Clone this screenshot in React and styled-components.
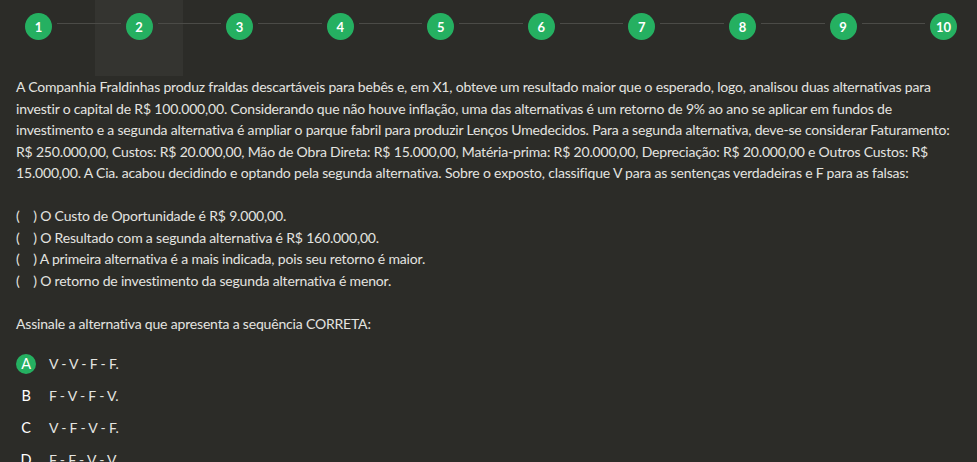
import React from "react";
import styled, { createGlobalStyle } from "styled-components";

const GlobalStyle = createGlobalStyle`
  html, body {
    margin: 0;
    padding: 0;
    background: #2c2c28;
  }
  body {
    font-family: "Lato", "Liberation Sans", sans-serif;
    color: #e4e4e0;
  }
`;

// Steps bar
const Steps = styled.nav`
  position: relative;
  z-index: 0;
  display: flex;
  align-items: flex-start;
  height: 76px;
  padding: 0 20px 0 25px;
  box-sizing: border-box;
`;

const Step = styled.div`
  position: relative;
  flex: 0 0 auto;
  width: 27px;
  height: 27px;
  margin-top: 13px;
  border-radius: 50%;
  background: #25b061;
  color: #fff;
  font-size: 13px;
  font-weight: 700;
  display: flex;
  align-items: center;
  justify-content: center;
  cursor: pointer;

  ${(p) =>
    p.$active &&
    `
    &::before {
      content: "";
      position: absolute;
      z-index: -1;
      top: -13px;
      left: -30.5px;
      width: 88px;
      height: 76px;
      background: #343430;
    }
  `}
`;

const Connector = styled.div`
  flex: 1;
  height: 1px;
  margin: 23px 5px 0;
  background: #4b4b47;
`;

// Question body
const Question = styled.section`
  padding: 0 12px 0 16px;
  font-size: 14px;
  letter-spacing: -0.18px;
  line-height: 21.5px;
`;

const Text = styled.p`
  margin: 0 0 21.5px;
`;

const Prompt = styled.p`
  margin: 0 0 14px;
`;

const Statements = styled.ul`
  list-style: none;
  margin: 0 0 21.5px;
  padding: 0;
`;

const Statement = styled.li`
  &::before {
    content: "(\\00a0\\00a0\\00a0\\00a0)\\00a0";
  }
`;

const Options = styled.ol`
  list-style: none;
  margin: 0;
  padding: 0;
`;

const Option = styled.li`
  display: flex;
  align-items: center;
  height: 32px;
  gap: 13px;
  cursor: pointer;
`;

const Letter = styled.span`
  width: 20px;
  height: 20px;
  border-radius: 50%;
  display: flex;
  align-items: center;
  justify-content: center;
  font-size: 14.5px;
  color: #fff;
  background: ${(p) => (p.$selected ? "#25b061" : "transparent")};
`;

const steps = [1, 2, 3, 4, 5, 6, 7, 8, 9, 10];

const statements = [
  "O Custo de Oportunidade é R$ 9.000,00.",
  "O Resultado com a segunda alternativa é R$ 160.000,00.",
  "A primeira alternativa é a mais indicada, pois seu retorno é maior.",
  "O retorno de investimento da segunda alternativa é menor.",
];

const options = [
  { letter: "A", text: "V - V - F - F." },
  { letter: "B", text: "F - V - F - V." },
  { letter: "C", text: "V - F - V - F." },
  { letter: "D", text: "F - F - V - V." },
];

export default function App() {
  return (
    <>
      <GlobalStyle />
      <Steps>
        {steps.map((n, i) => (
          <React.Fragment key={n}>
            {i > 0 && <Connector />}
            <Step $active={n === 2}>{n}</Step>
          </React.Fragment>
        ))}
      </Steps>
      <Question>
        <Text>
          A Companhia Fraldinhas produz fraldas descartáveis para bebês e, em X1, obteve um resultado maior que o
          esperado, logo, analisou duas alternativas para investir o capital de R$ 100.000,00. Considerando que não
          houve inflação, uma das alternativas é um retorno de 9% ao ano se aplicar em fundos de investimento e a
          segunda alternativa é ampliar o parque fabril para produzir Lenços Umedecidos. Para a segunda alternativa,
          deve-se considerar Faturamento: R$ 250.000,00, Custos: R$ 20.000,00, Mão de Obra Direta: R$ 15.000,00,
          Matéria-prima: R$ 20.000,00, Depreciação: R$ 20.000,00 e Outros Custos: R$ 15.000,00. A Cia. acabou
          decidindo e optando pela segunda alternativa. Sobre o exposto, classifique V para as sentenças verdadeiras
          e F para as falsas:
        </Text>
        <Statements>
          {statements.map((s) => (
            <Statement key={s}>{s}</Statement>
          ))}
        </Statements>
        <Prompt>Assinale a alternativa que apresenta a sequência CORRETA:</Prompt>
        <Options>
          {options.map((o) => (
            <Option key={o.letter}>
              <Letter $selected={o.letter === "A"}>{o.letter}</Letter>
              <span>{o.text}</span>
            </Option>
          ))}
        </Options>
      </Question>
    </>
  );
}
